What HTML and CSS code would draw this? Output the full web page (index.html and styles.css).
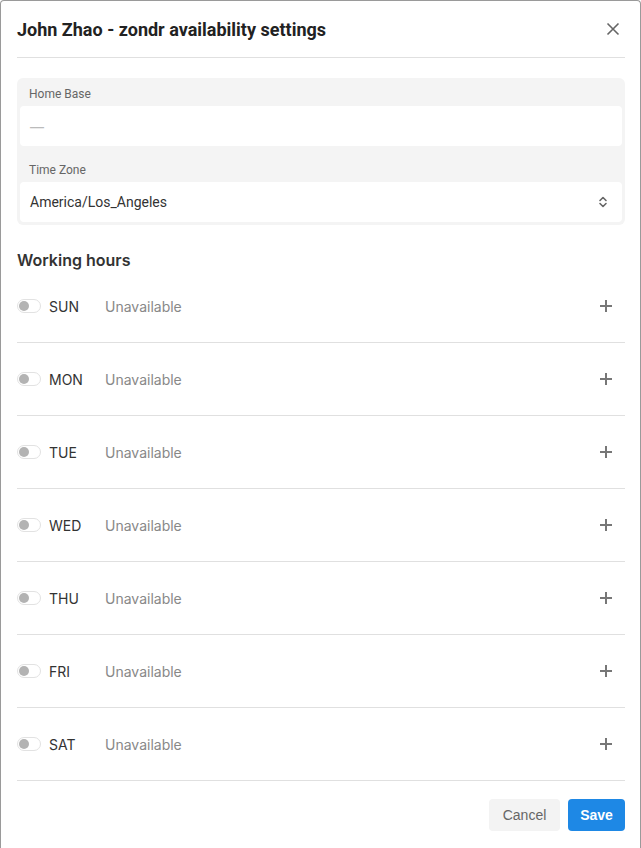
FILE: index.html
```html
<!DOCTYPE html>
<html>
<head>
<meta charset="utf-8">
<link rel="stylesheet" href="styles.css">
</head>
<body>
<div class="modal">
  <div class="header">
    <h1 class="title">John Zhao - zondr availability settings</h1>
    <svg class="close" width="14" height="14" viewBox="0 0 14 14"><path d="M1.5 1.5 L12.5 12.5 M12.5 1.5 L1.5 12.5" stroke="#666" stroke-width="1.6" fill="none"/></svg>
  </div>
  <div class="body">
    <div class="fields">
      <div class="field">
        <div class="label">Home Base</div>
        <div class="input placeholder">—</div>
      </div>
      <div class="field">
        <div class="label">Time Zone</div>
        <div class="input select">
          <span>America/Los_Angeles</span>
          <svg width="10" height="14" viewBox="0 0 10 14"><path d="M2 5.5 L5 2.5 L8 5.5 M2 8.5 L5 11.5 L8 8.5" stroke="#666" stroke-width="1.6" fill="none" stroke-linecap="round" stroke-linejoin="round"/></svg>
        </div>
      </div>
    </div>
    <h2 class="section">Working hours</h2>
    <div class="days">
      <div class="day"><span class="toggle"><span class="knob"></span></span><span class="dname">SUN</span><span class="status">Unavailable</span><svg class="plus" width="14" height="14" viewBox="0 0 14 14"><path d="M7 1 V13 M1 7 H13" stroke="#777" stroke-width="2"/></svg></div>
      <div class="day"><span class="toggle"><span class="knob"></span></span><span class="dname">MON</span><span class="status">Unavailable</span><svg class="plus" width="14" height="14" viewBox="0 0 14 14"><path d="M7 1 V13 M1 7 H13" stroke="#777" stroke-width="2"/></svg></div>
      <div class="day"><span class="toggle"><span class="knob"></span></span><span class="dname">TUE</span><span class="status">Unavailable</span><svg class="plus" width="14" height="14" viewBox="0 0 14 14"><path d="M7 1 V13 M1 7 H13" stroke="#777" stroke-width="2"/></svg></div>
      <div class="day"><span class="toggle"><span class="knob"></span></span><span class="dname">WED</span><span class="status">Unavailable</span><svg class="plus" width="14" height="14" viewBox="0 0 14 14"><path d="M7 1 V13 M1 7 H13" stroke="#777" stroke-width="2"/></svg></div>
      <div class="day"><span class="toggle"><span class="knob"></span></span><span class="dname">THU</span><span class="status">Unavailable</span><svg class="plus" width="14" height="14" viewBox="0 0 14 14"><path d="M7 1 V13 M1 7 H13" stroke="#777" stroke-width="2"/></svg></div>
      <div class="day"><span class="toggle"><span class="knob"></span></span><span class="dname">FRI</span><span class="status">Unavailable</span><svg class="plus" width="14" height="14" viewBox="0 0 14 14"><path d="M7 1 V13 M1 7 H13" stroke="#777" stroke-width="2"/></svg></div>
      <div class="day"><span class="toggle"><span class="knob"></span></span><span class="dname">SAT</span><span class="status">Unavailable</span><svg class="plus" width="14" height="14" viewBox="0 0 14 14"><path d="M7 1 V13 M1 7 H13" stroke="#777" stroke-width="2"/></svg></div>
    </div>
    <div class="footer">
      <button class="btn cancel">Cancel</button>
      <button class="btn save">Save</button>
    </div>
  </div>
</div>
</body>
</html>
```
FILE: styles.css
```css
html, body {
  margin: 0;
  padding: 0;
  background: #fff;
}
.modal {
  box-sizing: border-box;
  width: 641px;
  height: 848px;
  overflow: hidden;
  border: 1px solid #9a9a9a;
  border-bottom: none;
  border-radius: 4px 4px 0 0;
  padding: 0 15px 0 16px;
  font-family: Roboto, "Liberation Sans", sans-serif;
}
.header {
  height: 56px;
  display: flex;
  align-items: center;
  justify-content: space-between;
  border-bottom: 1px solid #e0e0e0;
}
.title {
  margin: 0;
  font-size: 18px;
  font-weight: 700;
  color: #222;
}
.close {
  margin-right: 5px;
}
.body {
  padding-top: 20px;
}
.fields {
  background: #f4f4f4;
  border-radius: 6px;
  padding: 3px;
}
.field + .field {
  margin-top: 11px;
}
.label {
  font-size: 12px;
  line-height: 16px;
  color: #666;
  padding: 5px 9px 4px;
}
.input {
  background: #fff;
  border-radius: 4px;
  height: 40px;
  display: flex;
  align-items: center;
  justify-content: space-between;
  padding: 0 14px 0 10px;
  font-size: 14px;
  color: #333;
}
.placeholder {
  color: #bbb;
  font-family: Inter, sans-serif;
}
.section {
  margin: 25px 0 0;
  font-family: Inter, sans-serif;
  font-size: 16px;
  line-height: 20px;
  font-weight: 600;
  color: #333;
}
.day {
  height: 72px;
  border-bottom: 1px solid #e0e0e0;
  display: flex;
  align-items: center;
  font-family: Inter, sans-serif;
  font-size: 14px;
}
.toggle {
  box-sizing: border-box;
  width: 24px;
  height: 14px;
  border: 1px solid #e2e2e2;
  border-radius: 7px;
  background: #fff;
  display: flex;
  align-items: center;
  padding-left: 1px;
}
.knob {
  width: 10px;
  height: 10px;
  border-radius: 50%;
  background: #b3b3b3;
}
.dname {
  margin-left: 8px;
  width: 56px;
  color: #333;
}
.status {
  color: #888;
  flex: 1;
}
.plus {
  margin-right: 12px;
}
.footer {
  display: flex;
  justify-content: flex-end;
  gap: 8px;
  padding-top: 18px;
}
.btn {
  border: none;
  border-radius: 4px;
  height: 32px;
  font-family: "Liberation Sans", Arial, sans-serif;
  font-size: 14px;
  padding: 0 12px;
}
.cancel {
  background: #f3f3f3;
  color: #666;
  width: 71px;
}
.save {
  background: #1e88e5;
  color: #fff;
  font-weight: 700;
  width: 57px;
}
```
